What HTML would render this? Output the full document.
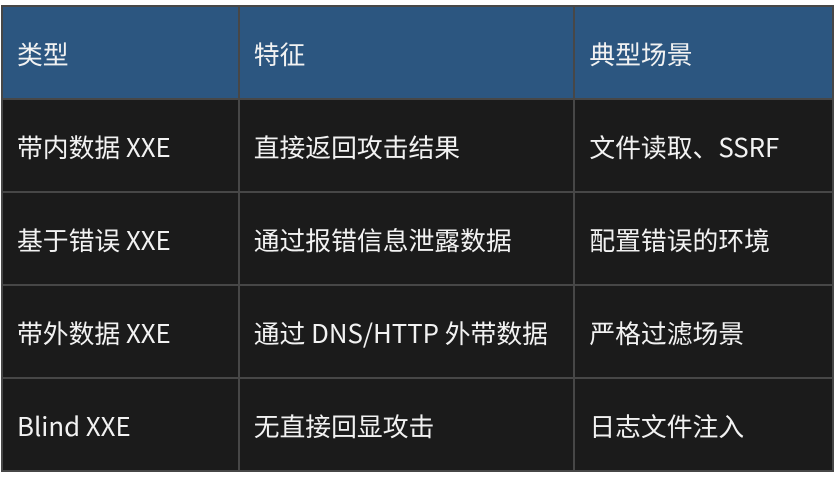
<!DOCTYPE html>
<html><head><meta charset="utf-8"><style>
html,body{margin:0;padding:0;background:#fff;width:834px;height:477px;overflow:hidden}
table{position:absolute;left:1px;top:5px;border-collapse:collapse;font-family:"Noto Sans CJK SC","Liberation Sans",sans-serif;font-size:25.8px;color:#f2f2f2}
td,th{border:2px solid #474747;padding:3px 0 0 14px;height:93px;box-sizing:border-box;text-align:left;font-weight:normal;background:#1b1b1b;vertical-align:middle;line-height:1}
tr{height:93px}
th{background:#2c5680}
</style></head><body>
<table>
<tr><th style="width:237px">类型</th><th style="width:336px">特征</th><th style="width:259px">典型场景</th></tr>
<tr><td>带内数据 XXE</td><td>直接返回攻击结果</td><td>文件读取、SSRF</td></tr>
<tr><td>基于错误 XXE</td><td>通过报错信息泄露数据</td><td>配置错误的环境</td></tr>
<tr><td>带外数据 XXE</td><td>通过 DNS/HTTP 外带数据</td><td>严格过滤场景</td></tr>
<tr><td>Blind XXE</td><td>无直接回显攻击</td><td>日志文件注入</td></tr>
</table>
</body></html>
